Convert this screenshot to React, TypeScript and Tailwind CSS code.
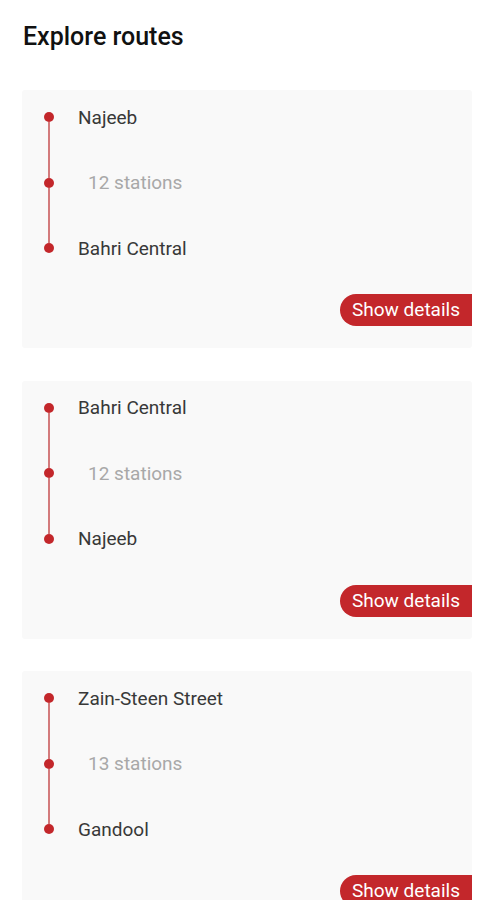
const routes = [
  { from: "Najeeb", to: "Bahri Central", stations: 12 },
  { from: "Bahri Central", to: "Najeeb", stations: 12 },
  { from: "Zain-Steen Street", to: "Gandool", stations: 13 },
];

function Dot() {
  return <div className="w-[10px] h-[10px] rounded-full bg-[#c3272b]" />;
}

function Line() {
  return <div className="w-[2px] h-[55.5px] bg-[#d37b7c]" />;
}

function RouteCard({ from, to, stations }: { from: string; to: string; stations: number }) {
  return (
    <div className="bg-[#f9f9f9] rounded-[3px] h-[258px] flex flex-col">
      <div className="flex pt-[22px] pl-[22px]">
        <div className="flex flex-col items-center">
          <Dot />
          <Line />
          <Dot />
          <Line />
          <Dot />
        </div>
        <div className="flex flex-col pl-[24px] pt-[1px] text-[19px]">
          <div className="h-[10px] flex items-center whitespace-nowrap text-[#383838]">{from}</div>
          <div className="h-[55.5px]" />
          <div className="h-[10px] flex items-center whitespace-nowrap text-[#a8a8a8] pl-[10px]">
            {stations} stations
          </div>
          <div className="h-[55.5px]" />
          <div className="h-[10px] flex items-center whitespace-nowrap text-[#383838]">{to}</div>
        </div>
      </div>
      <div className="flex justify-end mt-[40px]">
        <button className="h-[32px] w-[132px] rounded-l-full bg-[#c3272b] text-white text-[19px] pt-[1px] flex items-center justify-center">
          Show details
        </button>
      </div>
    </div>
  );
}

export default function App() {
  return (
    <div className="min-h-screen bg-white px-[22px] pt-[22px]" style={{ fontFamily: "Roboto, 'Noto Sans', sans-serif" }}>
      <h1 className="text-[25px] leading-[30px] font-medium text-[#111111] pl-[1px]">Explore routes</h1>
      <div className="flex flex-col gap-[32.5px] mt-[38px]">
        {routes.map((r, i) => (
          <RouteCard key={i} {...r} />
        ))}
      </div>
    </div>
  );
}
